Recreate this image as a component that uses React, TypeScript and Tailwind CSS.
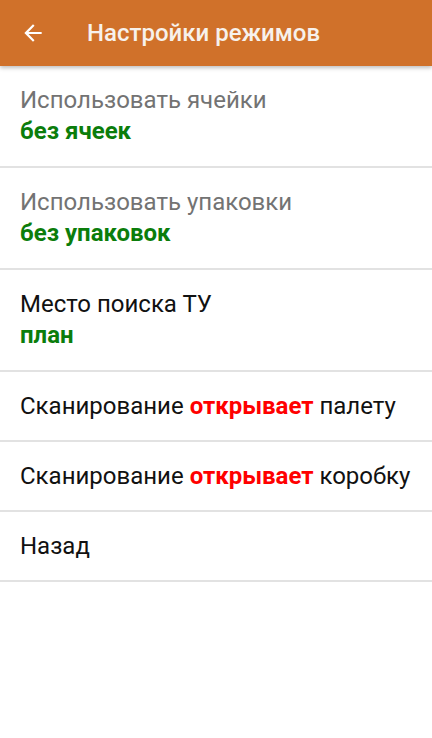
import React from "react";

function Divider() {
  return <div className="h-[2px] bg-[#e2e2e2]" />;
}

export default function App() {
  return (
    <div className="min-h-[738px] w-[432px] bg-white" style={{ fontFamily: "Roboto, 'Noto Sans', sans-serif" }}>
      <div className="relative z-10 flex h-[66px] items-center bg-[#d0712a] shadow-[0_2px_4px_rgba(0,0,0,0.25)]">
        <div className="ml-[20px] flex h-[26px] w-[26px] items-center justify-center">
          <svg width="26" height="26" viewBox="0 0 24 24" fill="#ffffff">
            <path d="M20 11H7.83l5.59-5.59L12 4l-8 8 8 8 1.41-1.41L7.83 13H20v-2z" />
          </svg>
        </div>
        <div className="ml-[41px] text-[24px] font-medium leading-none text-[#f7f1ec]">Настройки режимов</div>
      </div>

      <div className="flex h-[100px] flex-col justify-center px-[20px] text-[24px] leading-[31px]">
        <div className="text-[#737373]">Использовать ячейки</div>
        <div className="font-bold text-[#0b7d0b]">без ячеек</div>
      </div>
      <Divider />
      <div className="flex h-[100px] flex-col justify-center px-[20px] text-[24px] leading-[31px]">
        <div className="text-[#737373]">Использовать упаковки</div>
        <div className="font-bold text-[#0b7d0b]">без упаковок</div>
      </div>
      <Divider />
      <div className="flex h-[100px] flex-col justify-center px-[20px] text-[24px] leading-[31px]">
        <div className="text-[#111111]">Место поиска ТУ</div>
        <div className="font-bold text-[#0b7d0b]">план</div>
      </div>
      <Divider />
      <div className="flex h-[68px] items-center px-[20px] text-[24px] text-[#111111]">
        <span>
          Сканирование <span className="font-bold text-[#ff0000]">открывает</span> палету
        </span>
      </div>
      <Divider />
      <div className="flex h-[68px] items-center px-[20px] text-[24px] text-[#111111]">
        <span>
          Сканирование <span className="font-bold text-[#ff0000]">открывает</span> коробку
        </span>
      </div>
      <Divider />
      <div className="flex h-[68px] items-center px-[20px] text-[24px] text-[#111111]">
        <span>Назад</span>
      </div>
      <Divider />
    </div>
  );
}
